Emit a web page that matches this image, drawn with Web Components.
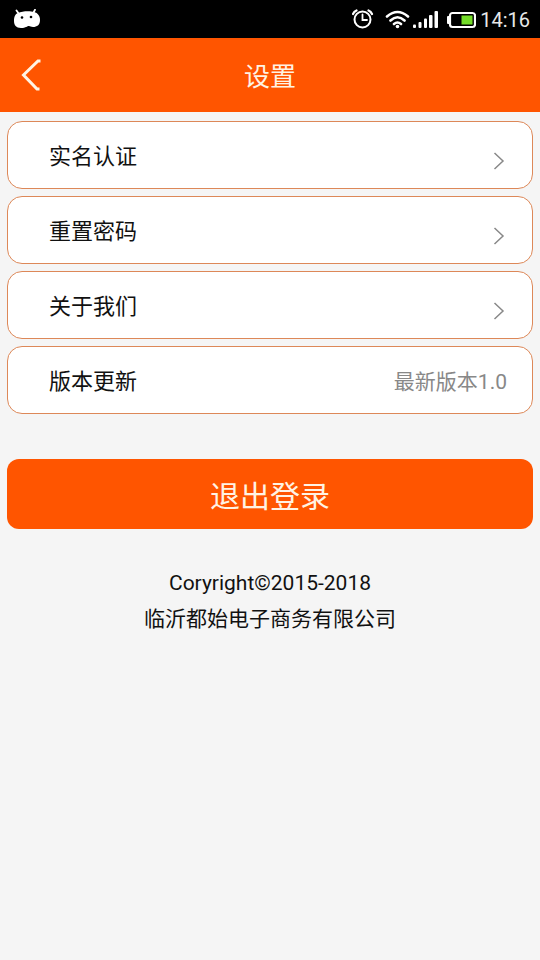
<!DOCTYPE html>
<html lang="zh-CN">
<head>
<meta charset="utf-8">
<meta name="viewport" content="width=device-width, initial-scale=1">
<title>设置</title>
<style>
  body {
    margin: 0;
    background: #f5f5f5;
    color: #111;
    font-family: Roboto, "Noto Sans CJK SC", sans-serif;
  }
</style>
</head>
<body>
<settings-page></settings-page>
<script>
class BaseElement extends HTMLElement {
  connectedCallback() {
    if (this.shadowRoot) return;
    this.attachShadow({ mode: "open" }).innerHTML = this.render();
  }
}

customElements.define("status-bar", class extends BaseElement {
  render() {
    return `<style>
      :host { display: flex; align-items: center; height: 38px; padding: 0 10px 0 13px; background: #000; color: #e8e8e8; }
      svg { display: block; flex: none; }
      .status { display: flex; align-items: center; margin-left: auto; }
      time { font-size: 20px; line-height: 24px; margin-left: 4px; padding-top: 2px; }
    </style>
    <svg width="28" height="20" viewBox="0 0 28 20" aria-hidden="true">
      <path d="M3.500 1.500 L6 5 M22 0.800 L20 4.500" stroke="#fff" stroke-width="1.800" stroke-linecap="round"/>
      <path d="M5 4 C9 2 17 1.500 21 3 C25 4 27 7 27 11 C27 16 24 18 20 18 C18 18 17 17 16 17 C14 17 13 19 8 19 C3 19 1 16 1 12 C1 8 2 5 5 4Z" fill="#fff"/>
      <circle cx="9" cy="8.500" r="1.300"/><circle cx="18" cy="8" r="1.300"/>
    </svg>
    <div class="status">
      <svg width="124" height="24" viewBox="0 0 124 24" aria-hidden="true">
        <g fill="none" stroke="#fff" stroke-linecap="round">
          <circle cx="10.500" cy="12.500" r="8" stroke-width="2"/>
          <path d="M10.500 7.500 V13 H15" stroke-width="1.800"/>
          <path d="M1 7 Q2 4.500 4.500 3.500 M16.500 3.500 Q19 4.500 20 7" stroke-width="2.200"/>
          <path d="M35 9.500 Q45.500 0.500 56 9.500 M38.500 13.500 Q45.500 7 52.500 13.500 M42 17 Q45.500 14 49 17" stroke-width="2.600"/>
        </g>
        <circle cx="45.500" cy="19.500" r="1.800" fill="#fff"/>
        <g fill="#fff">
          <rect x="61" y="17.500" width="3" height="3.500" rx="1"/>
          <rect x="66.500" y="15" width="3" height="6" rx="1"/>
          <rect x="72" y="11.500" width="3" height="9.500" rx="1"/>
          <rect x="77" y="8" width="3.500" height="13" rx="1"/>
          <rect x="82.500" y="4" width="3.500" height="17" rx="1"/>
          <rect x="95" y="9" width="3" height="8" rx="1"/>
        </g>
        <rect x="98" y="6" width="25" height="14" rx="2.500" fill="#000" stroke="#fff" stroke-width="2.200"/>
        <rect x="109.500" y="8.500" width="11" height="9" fill="#74dc28"/>
      </svg>
      <time>14:16</time>
    </div>`;
  }
});

customElements.define("title-bar", class extends BaseElement {
  render() {
    return `<style>
      :host { display: grid; grid-template-columns: 64px 1fr 64px; align-items: center; height: 74px; background: #ff5500; color: #fff3e4; }
      button { height: 74px; padding: 0 0 0 20px; border: 0; background: none; color: inherit; }
      svg { display: block; }
      h1 { margin: 0; padding-top: 4px; font-size: 26px; line-height: 38px; font-weight: 400; text-align: center; }
    </style>
    <button type="button" aria-label="返回">
      <svg width="24" height="34" viewBox="0 0 24 34" fill="none" stroke="currentColor"><path d="M20.500 3 H18 L3.500 17 L17 31 H19.500" stroke-width="3"/></svg>
    </button>
    <h1><slot></slot></h1>`;
  }
});

customElements.define("setting-row", class extends BaseElement {
  render() {
    const end = this.hasAttribute("value")
      ? `<span class="value">${this.getAttribute("value")}</span>`
      : `<svg width="12" height="18" viewBox="0 0 12 18" fill="none" stroke="#888" stroke-width="1.500" aria-hidden="true"><path d="M1.500 1 L10 9 L1.500 17"/></svg>`;
    return `<style>
      :host { display: block; }
      button { display: flex; align-items: center; justify-content: space-between; box-sizing: border-box; width: 100%; height: 68px;
        padding: 4px 25px 0 41px; border: 1px solid #dd8858; border-radius: 15px; background: #fff; color: inherit;
        font: inherit; font-size: 22px; line-height: 32px; text-align: left; }
      svg { display: block; margin: 8px 2px 0 0; }
      .value { color: #888; font-size: 21px; }
    </style>
    <button type="button"><span><slot></slot></span>${end}</button>`;
  }
});

customElements.define("primary-button", class extends BaseElement {
  render() {
    return `<style>
      :host { display: block; }
      button { display: block; width: 100%; height: 70px; padding: 6px 0 0; border: 0; border-radius: 12px; background: #ff5500;
        color: #fff3e4; font: inherit; font-size: 30px; line-height: 44px; }
    </style>
    <button type="button"><slot></slot></button>`;
  }
});

customElements.define("copyright-note", class extends BaseElement {
  render() {
    return `<style>
      :host { display: block; font-size: 21px; line-height: 36px; text-align: center; }
      ::slotted(p) { margin: 0; }
    </style><slot></slot>`;
  }
});

customElements.define("settings-page", class extends BaseElement {
  render() {
    return `<style>
      :host { display: block; min-height: 100vh; }
      main { padding: 9px 7px; }
      .rows { display: grid; gap: 7px; }
      primary-button { margin-top: 45px; }
      copyright-note { margin-top: 36px; }
    </style>
    <status-bar></status-bar>
    <title-bar>设置</title-bar>
    <main>
      <div class="rows">
        <setting-row>实名认证</setting-row>
        <setting-row>重置密码</setting-row>
        <setting-row>关于我们</setting-row>
        <setting-row value="最新版本1.0">版本更新</setting-row>
      </div>
      <primary-button>退出登录</primary-button>
      <copyright-note><p>Coryright©2015-2018</p><p>临沂都始电子商务有限公司</p></copyright-note>
    </main>`;
  }
});
</script>
</body>
</html>
